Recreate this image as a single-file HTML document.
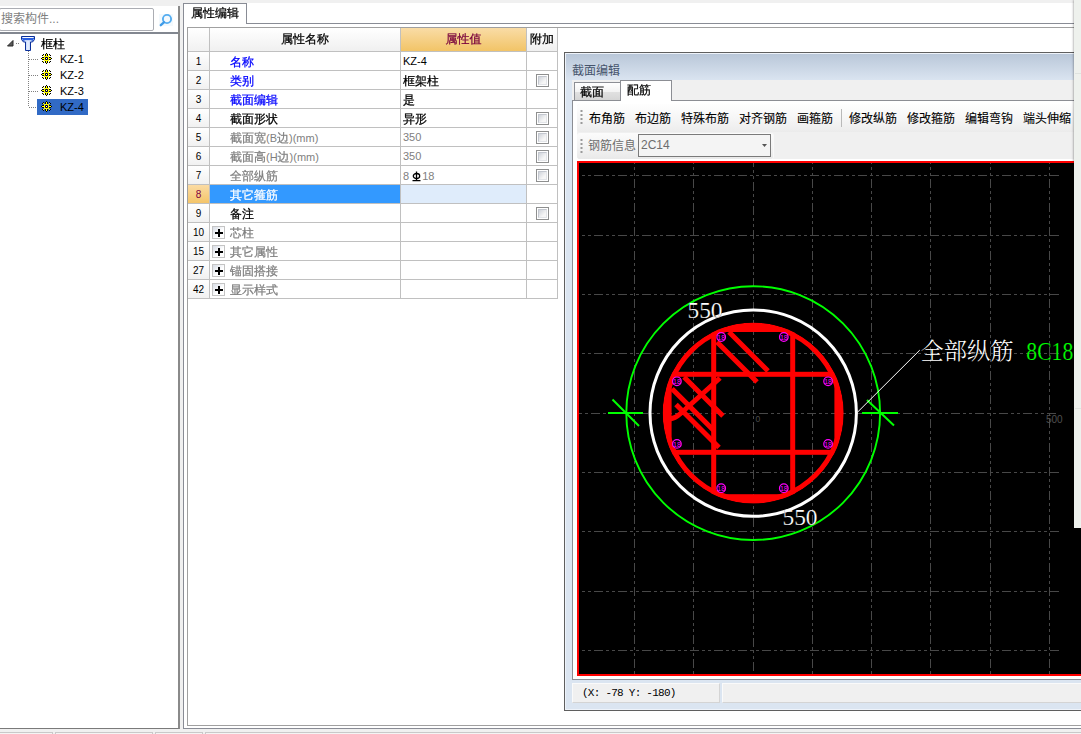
<!DOCTYPE html>
<html lang="zh-CN">
<head>
<meta charset="utf-8">
<title>属性编辑 - 截面编辑</title>
<style>
*,*:before,*:after{box-sizing:border-box;margin:0;padding:0}
html,body{width:1081px;height:734px;overflow:hidden;background:#f0f0f0}
body{position:relative;font-family:"Liberation Sans","WenQuanYi Zen Hei",sans-serif;font-size:12px;color:#000;line-height:1}
.abs{position:absolute}
.ss{font-family:"Liberation Sans","WenQuanYi Zen Hei",sans-serif;font-size:12px;-webkit-text-stroke:0.25px}
.yh{font-family:"Liberation Sans","Noto Sans CJK SC",sans-serif;font-size:12px}
/* left panel */
#left{left:0;top:6px;width:180px;height:723px;background:#fff;border-right:2px solid #8a8a8a;border-bottom:1px solid #7a7a7a}
#searchrow{left:0;top:0;width:178px;height:26px;background:#fff}
#search{left:-1px;top:2px;width:155px;height:23px;background:#fff;border:1px solid #abadb3;border-radius:2px;color:#7f7f7f;padding:4px 0 0 1px;white-space:nowrap}
#treetop{left:0;top:26px;width:178px;height:2px;background:#828790}
.trow{position:absolute;height:16px;line-height:16px;white-space:nowrap}
/* tab panel */
#tabstrip{left:183px;top:3px;width:898px;height:21px;background:#fff}
#tabpanel{left:183px;top:23px;width:905px;height:706px;background:#fff;border:1px solid #898c95}
#tabinner{left:187px;top:27px;width:900px;height:699px;background:#fff;border:1px solid #a0a0a0}
#tab1{left:183px;top:3px;width:64px;height:21px;background:#fff;border:1px solid #898c95;border-bottom:none;padding:3px 0 0 7px;white-space:nowrap}
/* grid */
#grid{left:188px;top:28px;width:370px;height:271px;background:#fff}
.gr{position:absolute;left:0;width:370px;height:19px;border-bottom:1px solid #c0c0c0}
.gc{position:absolute;top:0;height:100%;border-right:1px solid #c0c0c0;white-space:nowrap;overflow:hidden}
.c0{left:0;width:22px;background:linear-gradient(#fff,#f1f1f1);text-align:center;padding:5px 0 0 0;font-size:10px;-webkit-text-stroke:0}
.l{font-size:11px;-webkit-text-stroke:0}
.c1{left:22px;width:191px;padding:4px 0 0 20px}
.c2{left:213px;width:126px;padding:4px 0 0 2px}
.c3{left:339px;width:31px}
.blue{color:#0000ff}.gray{color:#808080}
.cb{position:absolute;left:9px;top:3px;width:13px;height:13px;border:1px solid #8e8f8f;background:#fff}
.cb:after{content:"";position:absolute;left:1px;top:1px;width:9px;height:9px;border:1px solid #d4d7dc;border-color:#c3c7cf #e2e4e8 #e2e4e8 #c3c7cf;background:linear-gradient(135deg,#cfd3da,#f6f6f6 70%)}
.pm{position:absolute;left:2px;top:3px;width:13px;height:13px;border:1px solid #c4c4c4;background:linear-gradient(135deg,#d8dde6,#fff 60%)}
.pm:before{content:"";position:absolute;left:2px;top:4.5px;width:7.5px;height:2px;background:#000}
.pm:after{content:"";position:absolute;left:4.6px;top:1.5px;width:2px;height:8px;background:#000}
/* section window */
#win{left:564px;top:52px;width:530px;height:659px;border:1px solid #5f5f5f;background:linear-gradient(#b8c6d8 0px,#dbe5f1 28px,#dbe5f1 100%)}
#wtitle{left:7px;top:12px;color:#46546c;white-space:nowrap}
.wtab{position:absolute;border:1px solid #8c8e94;border-bottom:none;white-space:nowrap;font-size:12px}
#page{left:9px;top:47px;width:540px;height:580px;background:#f0f0f0;border:1px solid #8c8e94}
.tbtn{position:absolute;top:59px;white-space:nowrap;font-size:12px}
#right{left:1074px;top:0;width:7px;height:528px;background:#eef1ed;box-shadow:-1px 0 2px rgba(0,0,0,.25)}
</style>
</head>
<body>
<!-- LEFT PANEL -->
<div id="left" class="abs">
  <div id="searchrow" class="abs"></div>
  <div id="search" class="abs yh">搜索构件...</div>
  <svg class="abs" style="left:158px;top:7px" width="16" height="16" viewBox="0 0 16 16"><rect x="1" y="1" width="14" height="12" fill="#f3f9fd"/><circle cx="9" cy="6" r="4.1" fill="#f4f9fd" stroke="#55adf0" stroke-width="1.9"/><path d="M5.9 9.3 L2.8 12.2" stroke="#3f9be8" stroke-width="2.3" stroke-linecap="round"/></svg>
  <div id="treetop" class="abs"></div>
  <div id="tree" class="abs" style="left:0;top:29px;width:178px;height:90px">
<svg class="abs" style="left:6px;top:4px" width="9" height="9" viewBox="0 0 9 9"><path d="M7 1.5 L7 7 L1.5 7 Z" fill="#595959" stroke="#2b2b2b" stroke-width="1" stroke-linejoin="round"/></svg>
<svg class="abs" style="left:0;top:0" width="60" height="90" viewBox="0 0 60 90"><g stroke="#808080" stroke-width="1" stroke-dasharray="1 1" fill="none"><path d="M16 8.5 H20"/><path d="M28.5 16 V72"/><path d="M29 24.5 H38"/><path d="M29 40.5 H38"/><path d="M29 56.5 H38"/><path d="M29 72.5 H38"/></g></svg>
<svg class="abs" style="left:20px;top:0" width="16" height="17" viewBox="0 0 16 17"><defs><linearGradient id="cg" x1="0" x2="1" y1="0" y2="0"><stop offset="0" stop-color="#7fa8ee"/><stop offset=".5" stop-color="#e8f0ff"/><stop offset="1" stop-color="#7fa8ee"/></linearGradient></defs><path d="M1.5 1.5 H14.5 V4.5 L12.5 7 H10.5 V15.5 H5.5 V7 H3.5 L1.5 4.5 Z" fill="url(#cg)" stroke="#0a2f9a" stroke-width="1"/><path d="M2 3.5 H14 M3 5 H13" stroke="#2a5fe0" stroke-width="1.4"/><path d="M2.5 2.5 H13.5" stroke="#ffffff" stroke-width="0.9"/><path d="M4.5 5.6 H11.5" stroke="#dfe9ff" stroke-width="0.9"/></svg>
<div class="trow ss" style="left:41px;top:1px">框柱</div>
<svg class="abs" style="left:41px;top:18px" width="11" height="11" viewBox="0 0 11 11" shape-rendering="crispEdges"><rect x="5" y="0" width="1" height="1" fill="#000"/><rect x="2" y="1" width="1" height="1" fill="#000"/><rect x="4" y="1" width="1" height="1" fill="#000"/><rect x="5" y="1" width="1" height="1" fill="#ffff00"/><rect x="6" y="1" width="1" height="1" fill="#000"/><rect x="8" y="1" width="1" height="1" fill="#000"/><rect x="1" y="2" width="1" height="1" fill="#000"/><rect x="2" y="2" width="1" height="1" fill="#ffff00"/><rect x="4" y="2" width="1" height="1" fill="#000"/><rect x="5" y="2" width="1" height="1" fill="#ffff00"/><rect x="6" y="2" width="1" height="1" fill="#000"/><rect x="8" y="2" width="1" height="1" fill="#ffff00"/><rect x="9" y="2" width="1" height="1" fill="#000"/><rect x="3" y="3" width="1" height="1" fill="#ffff00"/><rect x="4" y="3" width="1" height="1" fill="#ffff00"/><rect x="5" y="3" width="1" height="1" fill="#ffff00"/><rect x="6" y="3" width="1" height="1" fill="#ffff00"/><rect x="7" y="3" width="1" height="1" fill="#ffff00"/><rect x="1" y="4" width="1" height="1" fill="#000"/><rect x="2" y="4" width="1" height="1" fill="#000"/><rect x="3" y="4" width="1" height="1" fill="#ffff00"/><rect x="4" y="4" width="1" height="1" fill="#20205a"/><rect x="5" y="4" width="1" height="1" fill="#000"/><rect x="6" y="4" width="1" height="1" fill="#20205a"/><rect x="7" y="4" width="1" height="1" fill="#ffff00"/><rect x="8" y="4" width="1" height="1" fill="#000"/><rect x="9" y="4" width="1" height="1" fill="#000"/><rect x="0" y="5" width="1" height="1" fill="#000"/><rect x="1" y="5" width="1" height="1" fill="#ffff00"/><rect x="2" y="5" width="1" height="1" fill="#ffff00"/><rect x="3" y="5" width="1" height="1" fill="#ffff00"/><rect x="4" y="5" width="1" height="1" fill="#000"/><rect x="5" y="5" width="1" height="1" fill="#fff"/><rect x="6" y="5" width="1" height="1" fill="#000"/><rect x="7" y="5" width="1" height="1" fill="#ffff00"/><rect x="8" y="5" width="1" height="1" fill="#ffff00"/><rect x="9" y="5" width="1" height="1" fill="#ffff00"/><rect x="10" y="5" width="1" height="1" fill="#000"/><rect x="1" y="6" width="1" height="1" fill="#000"/><rect x="2" y="6" width="1" height="1" fill="#000"/><rect x="3" y="6" width="1" height="1" fill="#ffff00"/><rect x="4" y="6" width="1" height="1" fill="#20205a"/><rect x="5" y="6" width="1" height="1" fill="#000"/><rect x="6" y="6" width="1" height="1" fill="#20205a"/><rect x="7" y="6" width="1" height="1" fill="#ffff00"/><rect x="8" y="6" width="1" height="1" fill="#000"/><rect x="9" y="6" width="1" height="1" fill="#000"/><rect x="3" y="7" width="1" height="1" fill="#ffff00"/><rect x="4" y="7" width="1" height="1" fill="#ffff00"/><rect x="5" y="7" width="1" height="1" fill="#ffff00"/><rect x="6" y="7" width="1" height="1" fill="#ffff00"/><rect x="7" y="7" width="1" height="1" fill="#ffff00"/><rect x="1" y="8" width="1" height="1" fill="#000"/><rect x="2" y="8" width="1" height="1" fill="#ffff00"/><rect x="4" y="8" width="1" height="1" fill="#000"/><rect x="5" y="8" width="1" height="1" fill="#ffff00"/><rect x="6" y="8" width="1" height="1" fill="#000"/><rect x="8" y="8" width="1" height="1" fill="#ffff00"/><rect x="9" y="8" width="1" height="1" fill="#000"/><rect x="2" y="9" width="1" height="1" fill="#000"/><rect x="4" y="9" width="1" height="1" fill="#000"/><rect x="5" y="9" width="1" height="1" fill="#ffff00"/><rect x="6" y="9" width="1" height="1" fill="#000"/><rect x="8" y="9" width="1" height="1" fill="#000"/><rect x="5" y="10" width="1" height="1" fill="#000"/></svg>
<div class="trow ss l" style="left:60px;top:16px">KZ-1</div>
<svg class="abs" style="left:41px;top:34px" width="11" height="11" viewBox="0 0 11 11" shape-rendering="crispEdges"><rect x="5" y="0" width="1" height="1" fill="#000"/><rect x="2" y="1" width="1" height="1" fill="#000"/><rect x="4" y="1" width="1" height="1" fill="#000"/><rect x="5" y="1" width="1" height="1" fill="#ffff00"/><rect x="6" y="1" width="1" height="1" fill="#000"/><rect x="8" y="1" width="1" height="1" fill="#000"/><rect x="1" y="2" width="1" height="1" fill="#000"/><rect x="2" y="2" width="1" height="1" fill="#ffff00"/><rect x="4" y="2" width="1" height="1" fill="#000"/><rect x="5" y="2" width="1" height="1" fill="#ffff00"/><rect x="6" y="2" width="1" height="1" fill="#000"/><rect x="8" y="2" width="1" height="1" fill="#ffff00"/><rect x="9" y="2" width="1" height="1" fill="#000"/><rect x="3" y="3" width="1" height="1" fill="#ffff00"/><rect x="4" y="3" width="1" height="1" fill="#ffff00"/><rect x="5" y="3" width="1" height="1" fill="#ffff00"/><rect x="6" y="3" width="1" height="1" fill="#ffff00"/><rect x="7" y="3" width="1" height="1" fill="#ffff00"/><rect x="1" y="4" width="1" height="1" fill="#000"/><rect x="2" y="4" width="1" height="1" fill="#000"/><rect x="3" y="4" width="1" height="1" fill="#ffff00"/><rect x="4" y="4" width="1" height="1" fill="#20205a"/><rect x="5" y="4" width="1" height="1" fill="#000"/><rect x="6" y="4" width="1" height="1" fill="#20205a"/><rect x="7" y="4" width="1" height="1" fill="#ffff00"/><rect x="8" y="4" width="1" height="1" fill="#000"/><rect x="9" y="4" width="1" height="1" fill="#000"/><rect x="0" y="5" width="1" height="1" fill="#000"/><rect x="1" y="5" width="1" height="1" fill="#ffff00"/><rect x="2" y="5" width="1" height="1" fill="#ffff00"/><rect x="3" y="5" width="1" height="1" fill="#ffff00"/><rect x="4" y="5" width="1" height="1" fill="#000"/><rect x="5" y="5" width="1" height="1" fill="#fff"/><rect x="6" y="5" width="1" height="1" fill="#000"/><rect x="7" y="5" width="1" height="1" fill="#ffff00"/><rect x="8" y="5" width="1" height="1" fill="#ffff00"/><rect x="9" y="5" width="1" height="1" fill="#ffff00"/><rect x="10" y="5" width="1" height="1" fill="#000"/><rect x="1" y="6" width="1" height="1" fill="#000"/><rect x="2" y="6" width="1" height="1" fill="#000"/><rect x="3" y="6" width="1" height="1" fill="#ffff00"/><rect x="4" y="6" width="1" height="1" fill="#20205a"/><rect x="5" y="6" width="1" height="1" fill="#000"/><rect x="6" y="6" width="1" height="1" fill="#20205a"/><rect x="7" y="6" width="1" height="1" fill="#ffff00"/><rect x="8" y="6" width="1" height="1" fill="#000"/><rect x="9" y="6" width="1" height="1" fill="#000"/><rect x="3" y="7" width="1" height="1" fill="#ffff00"/><rect x="4" y="7" width="1" height="1" fill="#ffff00"/><rect x="5" y="7" width="1" height="1" fill="#ffff00"/><rect x="6" y="7" width="1" height="1" fill="#ffff00"/><rect x="7" y="7" width="1" height="1" fill="#ffff00"/><rect x="1" y="8" width="1" height="1" fill="#000"/><rect x="2" y="8" width="1" height="1" fill="#ffff00"/><rect x="4" y="8" width="1" height="1" fill="#000"/><rect x="5" y="8" width="1" height="1" fill="#ffff00"/><rect x="6" y="8" width="1" height="1" fill="#000"/><rect x="8" y="8" width="1" height="1" fill="#ffff00"/><rect x="9" y="8" width="1" height="1" fill="#000"/><rect x="2" y="9" width="1" height="1" fill="#000"/><rect x="4" y="9" width="1" height="1" fill="#000"/><rect x="5" y="9" width="1" height="1" fill="#ffff00"/><rect x="6" y="9" width="1" height="1" fill="#000"/><rect x="8" y="9" width="1" height="1" fill="#000"/><rect x="5" y="10" width="1" height="1" fill="#000"/></svg>
<div class="trow ss l" style="left:60px;top:32px">KZ-2</div>
<svg class="abs" style="left:41px;top:50px" width="11" height="11" viewBox="0 0 11 11" shape-rendering="crispEdges"><rect x="5" y="0" width="1" height="1" fill="#000"/><rect x="2" y="1" width="1" height="1" fill="#000"/><rect x="4" y="1" width="1" height="1" fill="#000"/><rect x="5" y="1" width="1" height="1" fill="#ffff00"/><rect x="6" y="1" width="1" height="1" fill="#000"/><rect x="8" y="1" width="1" height="1" fill="#000"/><rect x="1" y="2" width="1" height="1" fill="#000"/><rect x="2" y="2" width="1" height="1" fill="#ffff00"/><rect x="4" y="2" width="1" height="1" fill="#000"/><rect x="5" y="2" width="1" height="1" fill="#ffff00"/><rect x="6" y="2" width="1" height="1" fill="#000"/><rect x="8" y="2" width="1" height="1" fill="#ffff00"/><rect x="9" y="2" width="1" height="1" fill="#000"/><rect x="3" y="3" width="1" height="1" fill="#ffff00"/><rect x="4" y="3" width="1" height="1" fill="#ffff00"/><rect x="5" y="3" width="1" height="1" fill="#ffff00"/><rect x="6" y="3" width="1" height="1" fill="#ffff00"/><rect x="7" y="3" width="1" height="1" fill="#ffff00"/><rect x="1" y="4" width="1" height="1" fill="#000"/><rect x="2" y="4" width="1" height="1" fill="#000"/><rect x="3" y="4" width="1" height="1" fill="#ffff00"/><rect x="4" y="4" width="1" height="1" fill="#20205a"/><rect x="5" y="4" width="1" height="1" fill="#000"/><rect x="6" y="4" width="1" height="1" fill="#20205a"/><rect x="7" y="4" width="1" height="1" fill="#ffff00"/><rect x="8" y="4" width="1" height="1" fill="#000"/><rect x="9" y="4" width="1" height="1" fill="#000"/><rect x="0" y="5" width="1" height="1" fill="#000"/><rect x="1" y="5" width="1" height="1" fill="#ffff00"/><rect x="2" y="5" width="1" height="1" fill="#ffff00"/><rect x="3" y="5" width="1" height="1" fill="#ffff00"/><rect x="4" y="5" width="1" height="1" fill="#000"/><rect x="5" y="5" width="1" height="1" fill="#fff"/><rect x="6" y="5" width="1" height="1" fill="#000"/><rect x="7" y="5" width="1" height="1" fill="#ffff00"/><rect x="8" y="5" width="1" height="1" fill="#ffff00"/><rect x="9" y="5" width="1" height="1" fill="#ffff00"/><rect x="10" y="5" width="1" height="1" fill="#000"/><rect x="1" y="6" width="1" height="1" fill="#000"/><rect x="2" y="6" width="1" height="1" fill="#000"/><rect x="3" y="6" width="1" height="1" fill="#ffff00"/><rect x="4" y="6" width="1" height="1" fill="#20205a"/><rect x="5" y="6" width="1" height="1" fill="#000"/><rect x="6" y="6" width="1" height="1" fill="#20205a"/><rect x="7" y="6" width="1" height="1" fill="#ffff00"/><rect x="8" y="6" width="1" height="1" fill="#000"/><rect x="9" y="6" width="1" height="1" fill="#000"/><rect x="3" y="7" width="1" height="1" fill="#ffff00"/><rect x="4" y="7" width="1" height="1" fill="#ffff00"/><rect x="5" y="7" width="1" height="1" fill="#ffff00"/><rect x="6" y="7" width="1" height="1" fill="#ffff00"/><rect x="7" y="7" width="1" height="1" fill="#ffff00"/><rect x="1" y="8" width="1" height="1" fill="#000"/><rect x="2" y="8" width="1" height="1" fill="#ffff00"/><rect x="4" y="8" width="1" height="1" fill="#000"/><rect x="5" y="8" width="1" height="1" fill="#ffff00"/><rect x="6" y="8" width="1" height="1" fill="#000"/><rect x="8" y="8" width="1" height="1" fill="#ffff00"/><rect x="9" y="8" width="1" height="1" fill="#000"/><rect x="2" y="9" width="1" height="1" fill="#000"/><rect x="4" y="9" width="1" height="1" fill="#000"/><rect x="5" y="9" width="1" height="1" fill="#ffff00"/><rect x="6" y="9" width="1" height="1" fill="#000"/><rect x="8" y="9" width="1" height="1" fill="#000"/><rect x="5" y="10" width="1" height="1" fill="#000"/></svg>
<div class="trow ss l" style="left:60px;top:48px">KZ-3</div>
<div class="abs" style="left:37px;top:64px;width:51px;height:16px;background:#316ac5"></div>
<svg class="abs" style="left:41px;top:66px" width="11" height="11" viewBox="0 0 11 11" shape-rendering="crispEdges"><rect x="5" y="0" width="1" height="1" fill="#000"/><rect x="2" y="1" width="1" height="1" fill="#000"/><rect x="4" y="1" width="1" height="1" fill="#000"/><rect x="5" y="1" width="1" height="1" fill="#ffff00"/><rect x="6" y="1" width="1" height="1" fill="#000"/><rect x="8" y="1" width="1" height="1" fill="#000"/><rect x="1" y="2" width="1" height="1" fill="#000"/><rect x="2" y="2" width="1" height="1" fill="#ffff00"/><rect x="4" y="2" width="1" height="1" fill="#000"/><rect x="5" y="2" width="1" height="1" fill="#ffff00"/><rect x="6" y="2" width="1" height="1" fill="#000"/><rect x="8" y="2" width="1" height="1" fill="#ffff00"/><rect x="9" y="2" width="1" height="1" fill="#000"/><rect x="3" y="3" width="1" height="1" fill="#ffff00"/><rect x="4" y="3" width="1" height="1" fill="#ffff00"/><rect x="5" y="3" width="1" height="1" fill="#ffff00"/><rect x="6" y="3" width="1" height="1" fill="#ffff00"/><rect x="7" y="3" width="1" height="1" fill="#ffff00"/><rect x="1" y="4" width="1" height="1" fill="#000"/><rect x="2" y="4" width="1" height="1" fill="#000"/><rect x="3" y="4" width="1" height="1" fill="#ffff00"/><rect x="4" y="4" width="1" height="1" fill="#20205a"/><rect x="5" y="4" width="1" height="1" fill="#000"/><rect x="6" y="4" width="1" height="1" fill="#20205a"/><rect x="7" y="4" width="1" height="1" fill="#ffff00"/><rect x="8" y="4" width="1" height="1" fill="#000"/><rect x="9" y="4" width="1" height="1" fill="#000"/><rect x="0" y="5" width="1" height="1" fill="#000"/><rect x="1" y="5" width="1" height="1" fill="#ffff00"/><rect x="2" y="5" width="1" height="1" fill="#ffff00"/><rect x="3" y="5" width="1" height="1" fill="#ffff00"/><rect x="4" y="5" width="1" height="1" fill="#000"/><rect x="5" y="5" width="1" height="1" fill="#fff"/><rect x="6" y="5" width="1" height="1" fill="#000"/><rect x="7" y="5" width="1" height="1" fill="#ffff00"/><rect x="8" y="5" width="1" height="1" fill="#ffff00"/><rect x="9" y="5" width="1" height="1" fill="#ffff00"/><rect x="10" y="5" width="1" height="1" fill="#000"/><rect x="1" y="6" width="1" height="1" fill="#000"/><rect x="2" y="6" width="1" height="1" fill="#000"/><rect x="3" y="6" width="1" height="1" fill="#ffff00"/><rect x="4" y="6" width="1" height="1" fill="#20205a"/><rect x="5" y="6" width="1" height="1" fill="#000"/><rect x="6" y="6" width="1" height="1" fill="#20205a"/><rect x="7" y="6" width="1" height="1" fill="#ffff00"/><rect x="8" y="6" width="1" height="1" fill="#000"/><rect x="9" y="6" width="1" height="1" fill="#000"/><rect x="3" y="7" width="1" height="1" fill="#ffff00"/><rect x="4" y="7" width="1" height="1" fill="#ffff00"/><rect x="5" y="7" width="1" height="1" fill="#ffff00"/><rect x="6" y="7" width="1" height="1" fill="#ffff00"/><rect x="7" y="7" width="1" height="1" fill="#ffff00"/><rect x="1" y="8" width="1" height="1" fill="#000"/><rect x="2" y="8" width="1" height="1" fill="#ffff00"/><rect x="4" y="8" width="1" height="1" fill="#000"/><rect x="5" y="8" width="1" height="1" fill="#ffff00"/><rect x="6" y="8" width="1" height="1" fill="#000"/><rect x="8" y="8" width="1" height="1" fill="#ffff00"/><rect x="9" y="8" width="1" height="1" fill="#000"/><rect x="2" y="9" width="1" height="1" fill="#000"/><rect x="4" y="9" width="1" height="1" fill="#000"/><rect x="5" y="9" width="1" height="1" fill="#ffff00"/><rect x="6" y="9" width="1" height="1" fill="#000"/><rect x="8" y="9" width="1" height="1" fill="#000"/><rect x="5" y="10" width="1" height="1" fill="#000"/></svg>
<div class="trow ss l" style="left:60px;top:64px">KZ-4</div>
</div>
</div>

<!-- TAB PANEL -->
<div id="tabstrip" class="abs"></div>
<div id="tabpanel" class="abs"></div>
<div id="tabinner" class="abs"></div>
<div id="tab1" class="abs ss">属性编辑</div>

<div id="grid" class="abs ss">
<div class="gr" style="top:0;height:24px;border-bottom:1px solid #c0c0c0"><div class="gc c0"></div><div class="gc c1" style="background:linear-gradient(#fff,#f0f0f0);text-align:center;padding:5px 0 0 0">属性名称</div><div class="gc c2" style="background:linear-gradient(#f9dca6,#f2c467);color:#78003c;text-align:center;padding:5px 0 0 0">属性值</div><div class="gc c3" style="background:linear-gradient(#fff,#f0f0f0);text-align:center;padding:5px 0 0 0">附加</div></div>
<div class="gr" style="top:24px"><div class="gc c0">1</div><div class="gc c1 blue">名称</div><div class="gc c2 l">KZ-4</div><div class="gc c3"></div></div>
<div class="gr" style="top:43px"><div class="gc c0">2</div><div class="gc c1 blue">类别</div><div class="gc c2 ">框架柱</div><div class="gc c3"><span class=cb></span></div></div>
<div class="gr" style="top:62px"><div class="gc c0">3</div><div class="gc c1 blue">截面编辑</div><div class="gc c2 ">是</div><div class="gc c3"></div></div>
<div class="gr" style="top:81px"><div class="gc c0">4</div><div class="gc c1 ">截面形状</div><div class="gc c2 ">异形</div><div class="gc c3"><span class=cb></span></div></div>
<div class="gr" style="top:100px"><div class="gc c0">5</div><div class="gc c1 gray">截面宽<span class="l">(B</span>边<span class="l">)(mm)</span></div><div class="gc c2 gray l">350</div><div class="gc c3"><span class=cb></span></div></div>
<div class="gr" style="top:119px"><div class="gc c0">6</div><div class="gc c1 gray">截面高<span class="l">(H</span>边<span class="l">)(mm)</span></div><div class="gc c2 gray l">350</div><div class="gc c3"><span class=cb></span></div></div>
<div class="gr" style="top:138px"><div class="gc c0">7</div><div class="gc c1 gray">全部纵筋</div><div class="gc c2 gray"><span class="l">8</span><svg width="9" height="11" viewBox="0 0 9 11" style="vertical-align:-2px;margin:0 1px 0 3px"><g stroke="#000" stroke-width="1.3" fill="none"><ellipse cx="4.5" cy="5" rx="3.2" ry="2.5"/><path d="M4.5 0.5 V9.5 M0.5 9.6 H8.5"/></g></svg><span class="l">18</span></div><div class="gc c3"><span class=cb></span></div></div>
<div class="gr" style="top:157px"><div class="gc c0" style="background:linear-gradient(#fbdba3,#f4c56a);color:#800040">8</div><div class="gc c1 " style="background:#3399ff;color:#fff">其它箍筋</div><div class="gc c2 " style="background:#dfecfb"></div><div class="gc c3"></div></div>
<div class="gr" style="top:176px"><div class="gc c0">9</div><div class="gc c1 ">备注</div><div class="gc c2 "></div><div class="gc c3"><span class=cb></span></div></div>
<div class="gr" style="top:195px"><div class="gc c0">10</div><div class="gc c1 gray"><span class="pm"></span>芯柱</div><div class="gc c2 "></div><div class="gc c3"></div></div>
<div class="gr" style="top:214px"><div class="gc c0">15</div><div class="gc c1 gray"><span class="pm"></span>其它属性</div><div class="gc c2 "></div><div class="gc c3"></div></div>
<div class="gr" style="top:233px"><div class="gc c0">27</div><div class="gc c1 gray"><span class="pm"></span>锚固搭接</div><div class="gc c2 "></div><div class="gc c3"></div></div>
<div class="gr" style="top:252px"><div class="gc c0">42</div><div class="gc c1 gray"><span class="pm"></span>显示样式</div><div class="gc c2 "></div><div class="gc c3"></div></div>
</div>

<!-- SECTION WINDOW -->
<div id="win" class="abs">
<div class="abs" style="left:0;top:0;width:530px;height:657px;border:1px solid #eef3fa;border-right:none"></div>
<div id="wtitle" class="abs yh" style="left:7px;top:12px">截面编辑</div>
<div class="abs" style="left:7px;top:27px;width:530px;height:21px;background:#f0f0f0"></div>
<div class="wtab ss" style="left:9px;top:29px;width:47px;height:19px;background:linear-gradient(#fff 0,#f2f2f2 50%,#e0e0e0 52%,#d4d4d4 100%);padding:3px 0 0 5px">截面</div>
<div class="abs" style="left:7px;top:47px;width:520px;height:580px;background:#fff;border:1px solid #8c8e94"></div>
<div class="wtab ss" style="left:55px;top:27px;width:52px;height:21px;background:#fff;padding:3px 0 0 6px">配筋</div>
<div class="abs" style="left:12px;top:51px;width:520px;height:55px;background:#f0f0f0;border-radius:3px 0 0 3px"></div>
<div class="abs" style="left:12px;top:51px;width:520px;height:28px;background:linear-gradient(#fefefe,#f6f6f6 50%,#eeeeee 90%,#ebebeb);border-radius:3px 0 0 3px"></div>
<div class="abs" style="left:12px;top:80px;width:196px;height:26px;background:linear-gradient(#fbfbfb,#f3f3f3 55%,#e9e9e9);border-radius:3px;box-shadow:1px 0 0 #f8f8f8"></div>
<svg class="abs" style="left:15px;top:56px" width="3" height="18" viewBox="0 0 3 18"><g fill="#9a9a9a"><rect x="0.5" y="1" width="2" height="2"/><rect x="0.5" y="5" width="2" height="2"/><rect x="0.5" y="9" width="2" height="2"/><rect x="0.5" y="13" width="2" height="2"/></g></svg>
<svg class="abs" style="left:15px;top:85px" width="3" height="18" viewBox="0 0 3 18"><g fill="#9a9a9a"><rect x="0.5" y="1" width="2" height="2"/><rect x="0.5" y="5" width="2" height="2"/><rect x="0.5" y="9" width="2" height="2"/><rect x="0.5" y="13" width="2" height="2"/></g></svg>
<div class="abs yh" style="left:24px;top:60px;white-space:nowrap;color:#000;-webkit-text-stroke:0.1px">布角筋</div>
<div class="abs yh" style="left:70px;top:60px;white-space:nowrap;color:#000;-webkit-text-stroke:0.1px">布边筋</div>
<div class="abs yh" style="left:116px;top:60px;white-space:nowrap;color:#000;-webkit-text-stroke:0.1px">特殊布筋</div>
<div class="abs yh" style="left:174px;top:60px;white-space:nowrap;color:#000;-webkit-text-stroke:0.1px">对齐钢筋</div>
<div class="abs yh" style="left:232px;top:60px;white-space:nowrap;color:#000;-webkit-text-stroke:0.1px">画箍筋</div>
<div class="abs yh" style="left:284px;top:60px;white-space:nowrap;color:#000;-webkit-text-stroke:0.1px">修改纵筋</div>
<div class="abs yh" style="left:342px;top:60px;white-space:nowrap;color:#000;-webkit-text-stroke:0.1px">修改箍筋</div>
<div class="abs yh" style="left:400px;top:60px;white-space:nowrap;color:#000;-webkit-text-stroke:0.1px">编辑弯钩</div>
<div class="abs yh" style="left:458px;top:60px;white-space:nowrap;color:#000;-webkit-text-stroke:0.1px">端头伸缩</div>
<div class="abs" style="left:276px;top:56px;width:1px;height:18px;background:#b9b9b9"></div>
<div class="abs yh" style="left:23px;top:87px;white-space:nowrap;color:#6d6d6d">钢筋信息</div>
<div class="abs" style="left:73px;top:81px;width:133px;height:23px;border:1px solid #7a7a7a;background:#f4f4f4;color:#6d6d6d;font-size:12px;padding:4px 0 0 2px;font-family:'Liberation Sans',sans-serif">2C14</div>
<svg class="abs" style="left:197px;top:91px" width="5" height="3" viewBox="0 0 5 3"><path d="M0 0 H5 L2.5 3 Z" fill="#555"/></svg>
<div id="cv" class="abs" style="left:12px;top:108px;width:520px;height:515px;background:#000;border:2px solid #ff0000;overflow:hidden">
<svg class="abs" style="left:0;top:0" width="516" height="511" viewBox="579 163 516 511" font-family="'Liberation Serif','Noto Serif CJK SC',serif">
<g stroke="#484848" stroke-width="1" stroke-dasharray="9 3 3 3 3 3" fill="none"><path d="M634.5 163 V674 M693.5 163 V674 M812.5 163 V674 M871.5 163 V674 M930.5 163 V674 M990.5 163 V674 M1049.5 163 V674" stroke-dashoffset="8"/><path d="M579 175.5 H1059 M579 235.5 H1059 M579 294.5 H1059 M579 353.5 H1059 M579 472.5 H1059 M579 531.5 H1059 M579 591.5 H1059 M579 650.5 H1059" stroke-dashoffset="9"/><path d="M753.5 163 V674" stroke-dashoffset="5"/><path d="M579 413.5 H1059" stroke-dashoffset="12"/></g>
<text x="755.5" y="421.8" font-family="'Liberation Sans',sans-serif" font-size="8.5" fill="#4c4c4c">0</text>
<text x="1046" y="422.5" font-family="'Liberation Sans',sans-serif" font-size="10" fill="#505050">500</text>
<circle cx="753.2" cy="413.1" r="126.9" fill="none" stroke="#00ff00" stroke-width="1.9"/>
<path d="M608 413 H643 M612.5 399.5 L639 426 M862 413 H898 M867 400 L894 425.6" stroke="#00ff00" stroke-width="2" fill="none"/>
<circle cx="753.2" cy="413.1" r="103.2" fill="none" stroke="#ffffff" stroke-width="3"/>
<path d="M857.5 412.2 L919.8 350.1" stroke="#ffffff" stroke-width="1" fill="none"/>
<defs><clipPath id="rc"><circle cx="753.2" cy="413.1" r="90.6"/></clipPath></defs><g stroke="#ff0000" fill="none" stroke-width="5" clip-path="url(#rc)">
<circle cx="753.2" cy="413.1" r="88"/>
<rect x="713.7" y="329.5" width="79" height="167.2"/>
<rect x="669.1" y="374.3" width="167.8" height="78"/>
<path d="M717 342 L757 382 M729 332 L768 371" stroke-linecap="butt"/>
<path d="M684 377 L723 416 M672 388.7 L714 430.7 M676 404.5 L719 447.5 M720 378 L680 414 Q675 418.5 670 419"/>
</g>
<circle cx="828.1" cy="443.9" r="4.3" fill="#000" stroke="#ff00ff" stroke-width="1.2"/>
<text x="828.1" y="446.5" font-family="'Liberation Sans',sans-serif" font-size="7" fill="#ff00ff" text-anchor="middle">18</text>
<circle cx="783.8" cy="488.2" r="4.3" fill="#000" stroke="#ff00ff" stroke-width="1.2"/>
<text x="783.8" y="490.8" font-family="'Liberation Sans',sans-serif" font-size="7" fill="#ff00ff" text-anchor="middle">18</text>
<circle cx="721.2" cy="488.2" r="4.3" fill="#000" stroke="#ff00ff" stroke-width="1.2"/>
<text x="721.2" y="490.8" font-family="'Liberation Sans',sans-serif" font-size="7" fill="#ff00ff" text-anchor="middle">18</text>
<circle cx="676.9" cy="443.9" r="4.3" fill="#000" stroke="#ff00ff" stroke-width="1.2"/>
<text x="676.9" y="446.5" font-family="'Liberation Sans',sans-serif" font-size="7" fill="#ff00ff" text-anchor="middle">18</text>
<circle cx="676.9" cy="381.3" r="4.3" fill="#000" stroke="#ff00ff" stroke-width="1.2"/>
<text x="676.9" y="383.9" font-family="'Liberation Sans',sans-serif" font-size="7" fill="#ff00ff" text-anchor="middle">18</text>
<circle cx="721.2" cy="337.0" r="4.3" fill="#000" stroke="#ff00ff" stroke-width="1.2"/>
<text x="721.2" y="339.6" font-family="'Liberation Sans',sans-serif" font-size="7" fill="#ff00ff" text-anchor="middle">18</text>
<circle cx="783.8" cy="337.0" r="4.3" fill="#000" stroke="#ff00ff" stroke-width="1.2"/>
<text x="783.8" y="339.6" font-family="'Liberation Sans',sans-serif" font-size="7" fill="#ff00ff" text-anchor="middle">18</text>
<circle cx="828.1" cy="381.3" r="4.3" fill="#000" stroke="#ff00ff" stroke-width="1.2"/>
<text x="828.1" y="383.9" font-family="'Liberation Sans',sans-serif" font-size="7" fill="#ff00ff" text-anchor="middle">18</text>
<text x="687.5" y="318.2" font-size="24" fill="#ffffff" stroke="#000" stroke-width="0.2" textLength="35" lengthAdjust="spacingAndGlyphs">550</text>
<text x="782.5" y="524.8" font-size="24" fill="#ffffff" stroke="#000" stroke-width="0.2" textLength="35" lengthAdjust="spacingAndGlyphs">550</text>
<text x="920.5" y="358.6" font-size="22.4" font-weight="300" fill="#ffffff" textLength="93" lengthAdjust="spacingAndGlyphs">全部纵筋</text>
<text x="1026.3" y="359.5" font-size="24.5" fill="#00ff00" stroke="#000" stroke-width="0.2" textLength="47" lengthAdjust="spacingAndGlyphs">8C18</text>
</svg>
</div>
<div class="abs ss" style="left:7px;top:630px;width:148px;height:20px;background:#f0f0f0;border:1px solid #d4d4d4;border-top-color:#fafafa;border-left-color:#fafafa;padding:4px 0 0 9px;white-space:nowrap;font-family:'Liberation Mono',monospace;font-size:11px;letter-spacing:-0.75px;-webkit-text-stroke:0">(X: -78 Y: -180)</div>
<div class="abs" style="left:157px;top:630px;width:400px;height:20px;background:#f0f0f0;border:1px solid #d4d4d4;border-top-color:#fafafa;border-left-color:#fafafa"></div>
</div>

<!-- bottom status strip -->
<div class="abs" style="left:0;top:732px;width:53px;height:3px;border-top:1px solid #c9c9c9;border-right:1px solid #c9c9c9;background:#f4f4f4"></div>
<div class="abs" style="left:55px;top:732px;width:98px;height:3px;border-top:1px solid #c9c9c9;border-left:1px solid #c9c9c9;border-right:1px solid #c9c9c9;background:#f4f4f4"></div>
<div class="abs" style="left:155px;top:732px;width:48px;height:3px;border-top:1px solid #c9c9c9;border-left:1px solid #c9c9c9;border-right:1px solid #c9c9c9;background:#f4f4f4"></div>
<div class="abs" style="left:205px;top:732px;width:900px;height:3px;border-top:1px solid #c9c9c9;border-left:1px solid #c9c9c9;background:#f4f4f4"></div>
<div id="right" class="abs"><div class="abs" style="left:1px;top:73px;width:6px;height:1px;background:#dfe3df"></div><div class="abs" style="left:1px;top:408px;width:6px;height:1px;background:#dfe3df"></div></div>
</body>
</html>
